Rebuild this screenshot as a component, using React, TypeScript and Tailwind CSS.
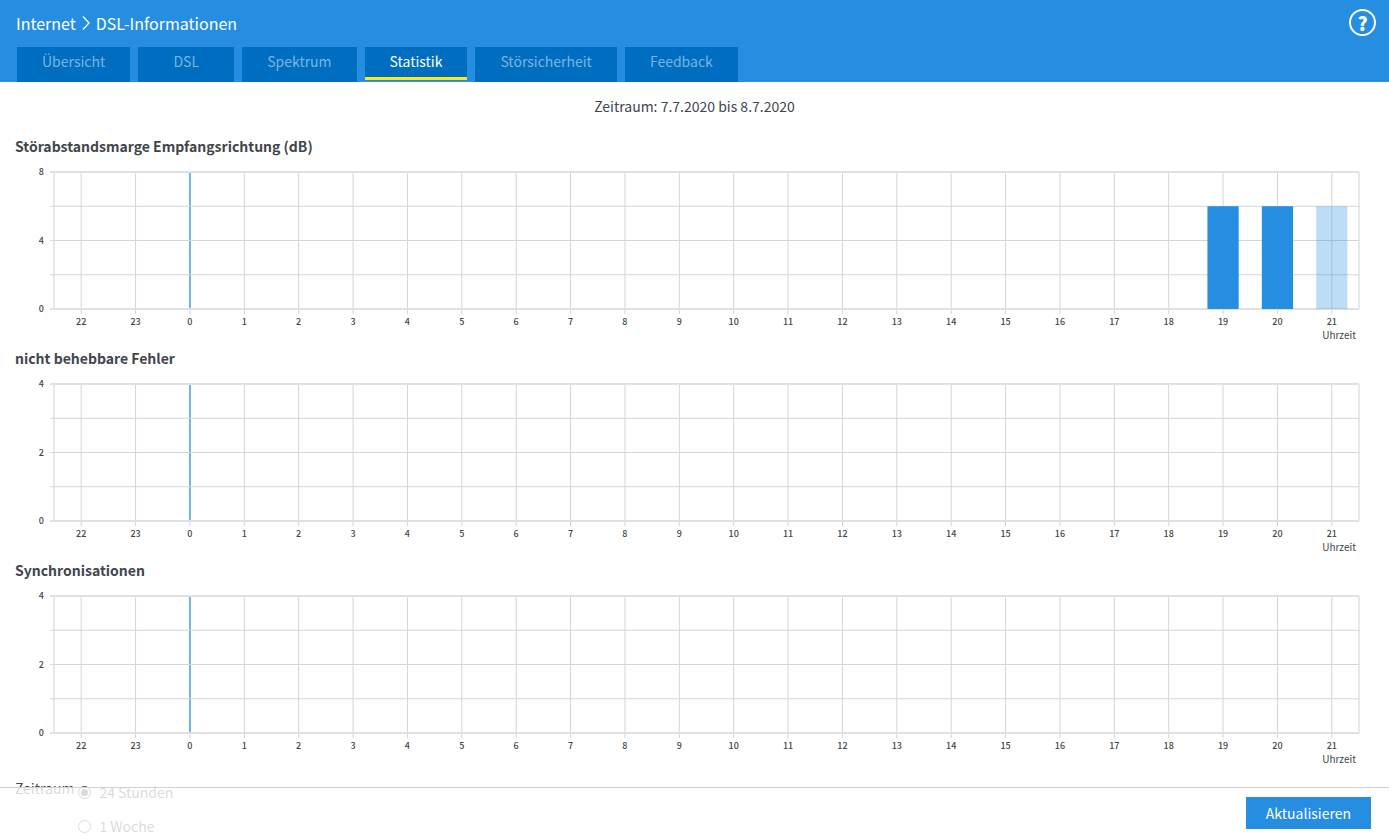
import { useId, useState } from "react";

interface Bar {
  hour: string;
  value: number;
  partial?: boolean;
}

interface ChartProps {
  title: string;
  max: number;
  bars?: Bar[];
}

const TABS = ["Übersicht", "DSL", "Spektrum", "Statistik", "Störsicherheit", "Feedback"];

const HOURS = Array.from({ length: 24 }, (_, i) => String((i + 22) % 24));

const PLOT_HEIGHT = 137;
const ROWS = 4;
const SLOT = 100 / HOURS.length;
const BAR_WIDTH = SLOT * 0.575;

const center = (index: number) => `${(index + 0.5) * SLOT}%`;

const Chart = ({ title, max, bars = [] }: ChartProps) => {
  const titleId = useId();

  return (
    <section className="mb-[39px]">
      <h2 id={titleId} className="mb-4 text-[14px] leading-5 font-bold">
        {title}
      </h2>
      <div className="pr-[15px] pl-[39px]">
        <svg
          role="img"
          aria-labelledby={titleId}
          className="block h-[137px] w-full overflow-visible"
        >
          {/* midnight marker, below the grid */}
          <line
            x1={center(HOURS.indexOf("0"))}
            x2={center(HOURS.indexOf("0"))}
            y1={0}
            y2={PLOT_HEIGHT}
            stroke="#74b2de"
            strokeWidth={2}
          />

          <g stroke="#d5d5d5">
            {HOURS.map((hour, i) =>
              hour === "0" ? (
                <line key={hour} x1={center(i)} x2={center(i)} y1={PLOT_HEIGHT} y2={PLOT_HEIGHT + 5} />
              ) : (
                <line key={hour} x1={center(i)} x2={center(i)} y1={0} y2={PLOT_HEIGHT + 5} />
              )
            )}
            <line x1="0" x2="0" y1={0} y2={PLOT_HEIGHT} strokeWidth={2} stroke="#e8e8e8" />
            <line x1="100%" x2="100%" y1={0} y2={PLOT_HEIGHT} strokeWidth={2} stroke="#e8e8e8" />
            {Array.from({ length: ROWS + 1 }, (_, i) => {
              const y = (PLOT_HEIGHT / ROWS) * i;
              const edge = i === 0 || i === ROWS;
              return (
                <line
                  key={i}
                  x1={-4}
                  x2="100%"
                  y1={y}
                  y2={y}
                  strokeWidth={edge ? 2 : 1}
                  stroke={edge ? "#e0e0e0" : "#d5d5d5"}
                />
              );
            })}
          </g>

          {bars.map((bar) => {
            const height = (bar.value / max) * PLOT_HEIGHT;
            return (
              <rect
                key={bar.hour}
                x={`${(HOURS.indexOf(bar.hour) + 0.5) * SLOT - BAR_WIDTH / 2}%`}
                y={PLOT_HEIGHT - height}
                width={`${BAR_WIDTH}%`}
                height={height}
                fill="#268ee0"
                fillOpacity={bar.partial ? 0.3 : 1}
              />
            );
          })}

          <g className="fill-[#3f464c] text-[9px] font-medium">
            {[max, max / 2, 0].map((value, i) => (
              <text key={value} x={-10} y={(PLOT_HEIGHT / 2) * i + 3} textAnchor="end">
                {value}
              </text>
            ))}
            {HOURS.map((hour, i) => (
              <text key={hour} x={center(i)} y={PLOT_HEIGHT + 16} textAnchor="middle">
                {hour}
              </text>
            ))}
          </g>
          <text
            x="100%"
            dx={-3}
            y={PLOT_HEIGHT + 30}
            textAnchor="end"
            className="fill-[#3f464c] text-[10px]"
          >
            Uhrzeit
          </text>
        </svg>
      </div>
    </section>
  );
};

const App = () => {
  const [activeTab, setActiveTab] = useState("Statistik");
  const [period, setPeriod] = useState("24 Stunden");

  return (
    <div className="relative flex h-screen flex-col bg-white font-['Noto_Sans_CJK_SC',sans-serif] text-[14px] leading-5 text-[#3f464c]">
      <header className="shrink-0 bg-[#268ee0] pl-4 text-white">
        <div className="mb-0.5 flex h-[45px] items-center justify-between pr-[13px]">
          <h1 className="flex items-center gap-1 text-[16px] leading-6">
            <a href="#internet">Internet</a>
            <svg width="12" height="16" viewBox="0 0 12 16" fill="none" stroke="currentColor" strokeWidth="1.3" aria-hidden="true">
              <path d="M3 1.5 9 8l-6 6.5" />
            </svg>
            <span>DSL-Informationen</span>
          </h1>
          <button
            type="button"
            aria-label="Hilfe"
            className="flex size-[27px] items-center justify-center rounded-full border-2 border-white text-[19px] leading-5 font-black"
          >
            ?
          </button>
        </div>
        <nav className="flex h-[35px] items-start gap-2 pl-px">
          {TABS.map((tab) => (
            <button
              key={tab}
              type="button"
              onClick={() => setActiveTab(tab)}
              className={`flex min-w-24 justify-center bg-[#006ec0] px-[25px] pt-1 ${
                tab === activeTab
                  ? "h-[33px] border-b-[3px] border-[#ffe81a] text-white"
                  : "h-[35px] text-[#7ab4e0]"
              }`}
            >
              {tab}
            </button>
          ))}
        </nav>
      </header>

      <main className="min-h-0 flex-1 overflow-y-auto px-[15px] pt-3.5 pb-16 [scrollbar-width:none]">
        <p className="mb-5 text-center">Zeitraum: 7.7.2020 bis 8.7.2020</p>

        <Chart
          title="Störabstandsmarge Empfangsrichtung (dB)"
          max={8}
          bars={[
            { hour: "19", value: 6 },
            { hour: "20", value: 6 },
            { hour: "21", value: 6, partial: true },
          ]}
        />
        <Chart title="nicht behebbare Fehler" max={4} />
        <Chart title="Synchronisationen" max={4} />

        <fieldset className="flex gap-1 pt-1.5">
          <legend className="float-left leading-5">Zeitraum</legend>
          <div className="flex flex-col gap-3.5 pt-1">
            {["24 Stunden", "1 Woche"].map((option) => (
              <label key={option} className="flex items-center gap-2">
                <input
                  type="radio"
                  name="period"
                  checked={period === option}
                  onChange={() => setPeriod(option)}
                  className="size-[13px] appearance-none rounded-full border border-[#3f464c] bg-white checked:bg-[#3f464c] checked:bg-clip-content checked:p-0.5"
                />
                {option}
              </label>
            ))}
          </div>
        </fieldset>
      </main>

      {/* action bar floats over the scrolling content */}
      <footer className="absolute inset-x-0 bottom-0 flex h-[50px] items-start justify-end border-t border-[#cfd3d3] bg-white/80 pt-[9px] pr-[18px]">
        <button type="button" className="h-8 bg-[#268ee0] px-5 text-white">
          Aktualisieren
        </button>
      </footer>
    </div>
  );
};

export default App;
